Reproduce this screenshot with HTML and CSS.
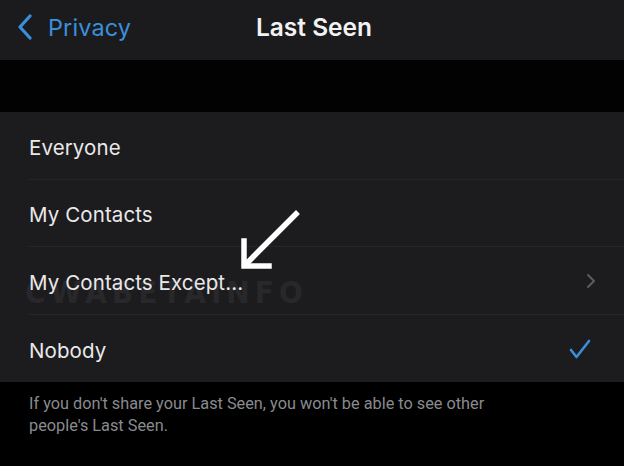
FILE: index.html
```html
<!DOCTYPE html>
<html>
<head>
<meta charset="utf-8">
<link rel="stylesheet" href="styles.css">
</head>
<body>
<div class="screen">
  <header class="nav">
    <div class="back">
      <svg class="back-icon" width="16" height="26" viewBox="0 0 16 26"><path d="M13 2 L3 13 L13 24" fill="none" stroke="#3a8fdc" stroke-width="3.2" stroke-linecap="round" stroke-linejoin="round"/></svg>
      <span class="back-label">Privacy</span>
    </div>
    <div class="title">Last Seen</div>
  </header>
  <div class="gap"></div>
  <ul class="list">
    <li class="row"><span class="label">Everyone</span></li>
    <li class="row"><span class="label">My Contacts</span></li>
    <li class="row">
      <span class="watermark">CWABETAINFO</span>
      <span class="label">My Contacts Except...</span>
      <svg class="chevron" width="10" height="16" viewBox="0 0 10 16"><path d="M2 2 L8 8 L2 14" fill="none" stroke="#5c5c60" stroke-width="2" stroke-linecap="round" stroke-linejoin="round"/></svg>
    </li>
    <li class="row"><span class="label">Nobody</span>
      <svg class="check" width="24" height="20" viewBox="0 0 24 20"><path d="M3 11 L8.5 18 L21 2" fill="none" stroke="#3a8fdc" stroke-width="2.6" stroke-linecap="round" stroke-linejoin="round"/></svg>
    </li>
  </ul>
  <p class="footer">If you don't share your Last Seen, you won't be able to see other people's Last Seen.</p>
  <svg class="arrow" width="70" height="70" viewBox="0 0 70 70"><path d="M60 6 L10 56" stroke="#fff" stroke-width="5.5" stroke-linecap="square" fill="none"/><path d="M8 33 L8 58 L33 58" stroke="#fff" stroke-width="5.5" fill="none" stroke-linecap="square" stroke-linejoin="miter"/></svg>
</div>
</body>
</html>
```
FILE: styles.css
```css
* { box-sizing: border-box; }
html, body { margin: 0; padding: 0; background: #000; }
.screen {
  position: relative;
  width: 624px;
  height: 466px;
  overflow: hidden;
  background: #000;
  font-family: "Inter", "Roboto", "Liberation Sans", sans-serif;
}
.nav {
  height: 60px;
  background: #1b1b1d;
  display: flex;
  align-items: center;
  position: relative;
  padding-bottom: 6px;
}
.back {
  display: flex;
  align-items: center;
  gap: 15px;
  padding-left: 17px;
}
.back-icon { display: block; }
.back-label {
  color: #3a8fdc;
  font-size: 23.5px;
  letter-spacing: 0.1px;
}
.title {
  position: absolute;
  left: 0; right: 0; top: 0; bottom: 6px;
  display: flex;
  align-items: center;
  justify-content: center;
  color: #f2f2f2;
  font-size: 24.5px;
  font-weight: 600;
  pointer-events: none;
  padding-left: 4px;
}
.gap { height: 52px; background: #020203; }
.list {
  list-style: none;
  margin: 0;
  padding: 0 0 0 29px;
  background: #1c1b1e;
}
.row {
  position: relative;
  height: 67.5px;
  display: flex;
  align-items: center;
  padding-right: 32px;
  border-bottom: 1.5px solid #27272a;
}
.row:last-child { border-bottom: none; }
.label {
  position: relative;
  flex: 1;
  color: #e9e9ea;
  font-size: 20.5px;
  letter-spacing: 0.1px;
  padding-top: 4px;
}
.watermark {
  position: absolute;
  left: -4px;
  top: 30px;
  font-family: "DejaVu Sans", sans-serif;
  font-weight: 700;
  font-size: 28px;
  letter-spacing: 5px;
  color: #28282b;
  transform: scaleY(1.05);
}
.chevron { display: block; margin-right: -4px; margin-top: 2px; }
.check { display: block; margin-top: 2px; }
.footer {
  margin: 0;
  padding: 11px 110px 0 29px;
  color: #8a8a8e;
  font-family: "Roboto", "Liberation Sans", sans-serif;
  font-size: 16.3px;
  line-height: 21.5px;
  letter-spacing: 0;
}
.arrow {
  position: absolute;
  left: 236px;
  top: 208px;
}
```
